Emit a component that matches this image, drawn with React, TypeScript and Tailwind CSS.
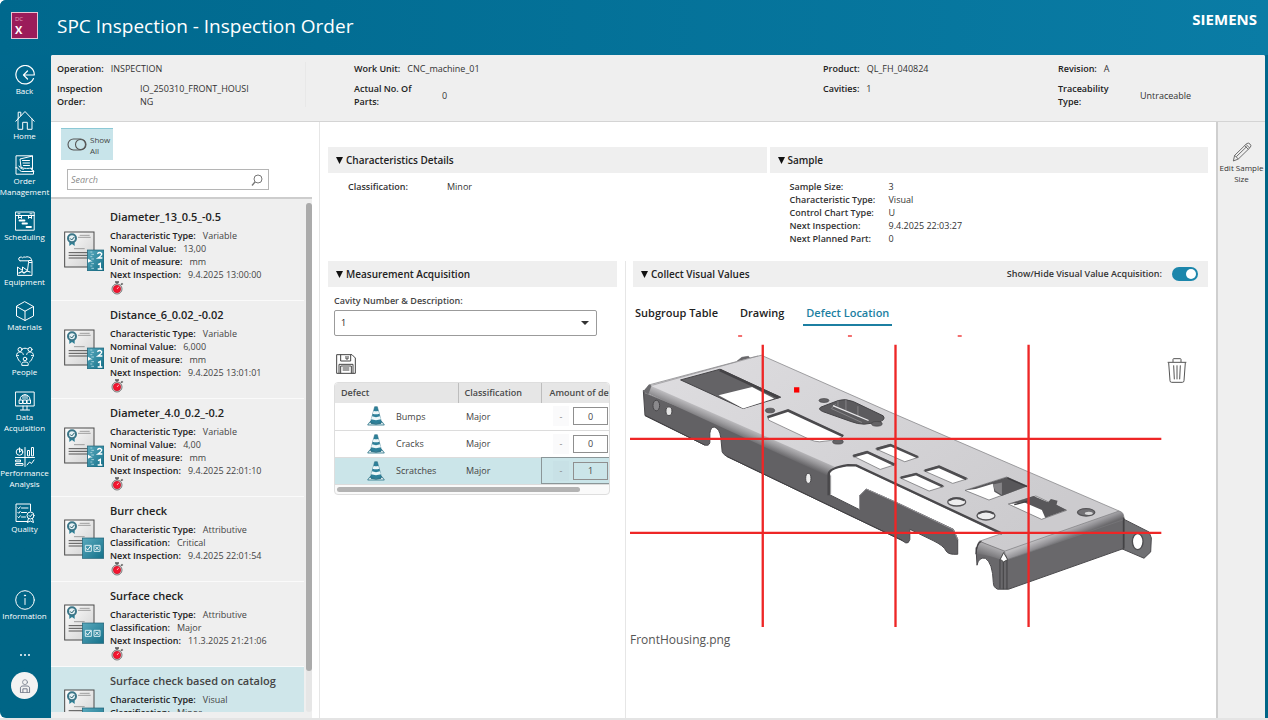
import { useState } from "react";
import type { ReactNode } from "react";
import clsx from "clsx";

/* ---------- sidebar icons ---------- */

function LineIcon({ children, className = "w-5 h-5" }: { children: ReactNode; className?: string }) {
  return (
    <svg
      viewBox="0 0 20 20"
      className={className}
      fill="none"
      stroke="currentColor"
      strokeWidth="1"
      strokeLinecap="round"
      strokeLinejoin="round"
      aria-hidden="true"
    >
      {children}
    </svg>
  );
}

const BackIcon = () => (
  <LineIcon>
    <path d="M18.500 13.500A9.200 9.200 0 1 1 19.300 10H8.500M12.500 6 8.500 10l4 4" strokeWidth="1.200" />
  </LineIcon>
);

const HomeIcon = () => (
  <LineIcon>
    <path d="M.8 11.200 10 1.500l9.200 9.700M3 9v10.300h4.700v-7h4.600v7H17V9M3.200 8.500V2.200h2.600v3.500" />
  </LineIcon>
);

const OrderIcon = () => (
  <LineIcon>
    <path d="M1 13V.8h16.500v13M1 13v6.200h17.500v-3.500l-2-1M1 12.500c3 0 3 3.500 5.500 4h12.500L16 13.200M4 11c1 2.500 3 3 4.500 3.200M17.500 1 5 4l1 8.200c3 2 8 1 10.500 1M7.500 5.500h7M8 8h6.500M8.500 10.500h6" />
  </LineIcon>
);

const SchedulingIcon = () => (
  <LineIcon>
    <path d="M.8 1h18.400v18.200H.8zM.8 4.500h18.400" />
    <path d="M3 2.800h2M15 2.800h2M3.500 4.500v3l1.500-1.500 1.500 1.500v-3M13.500 4.500v3l1.500-1.500 1.500 1.500v-3" />
    <path d="M4.500 9.500h5M7.500 12.500h4.500M11.500 16h4.500" strokeWidth="1.800" />
  </LineIcon>
);

const EquipmentIcon = () => (
  <LineIcon>
    <path d="M2.500 19V11l5 3.500v-3.500l5 3.500 1-8h3.500v12.500z" />
    <path d="M13.500 6V4.500H17V6.500" />
    <path d="M5 4.800a1.900 1.900 0 0 1 0-3.600q1.500-.6 2.500.6 1.200-1.400 3-.6Q12 .4 13.500 1q2.500 0 3 2.500M5 4.800h8" />
    <path d="M4 17l3-1.500 2 1.500 3-2 3 1" strokeWidth="1.300" />
  </LineIcon>
);

const MaterialsIcon = () => (
  <LineIcon>
    <path d="M10 .8 18.500 5.500v9.500L10 19.500 1.500 15V5.500zM1.500 5.500 10 10.200l8.500-4.700M10 10.200v9.300" />
  </LineIcon>
);

const PeopleIcon = () => (
  <LineIcon>
    <circle cx="5" cy="3.500" r="2" />
    <circle cx="15" cy="3.500" r="2" />
    <circle cx="10" cy="13" r="1.800" />
    <path d="M1.500 10c0-3 1.500-4 3.500-4s3 1 3.300 2.500M18.500 10c0-3-1.500-4-3.500-4s-3 1-3.300 2.500M6.800 19v-1.500c0-2 6.400-2 6.400 0V19zM7.500 2.800c1.500-.8 3.500-.8 5 0M2.500 11.500c.5 2 1.500 3.500 3 4.500M17.500 11.500c-.5 2-1.500 3.500-3 4.500M1.500 10l2-.5M18.500 10l-2-.5" />
  </LineIcon>
);

const DataIcon = () => (
  <LineIcon>
    <path d="M.8 1h18.400v14H.8zM8 15v3.500M12 15v3.500M5.500 19h9" />
    <path d="M5 8.500C5 2 15 2 15 8.500M8 4.500v3M12 4.500v3M10 3.500v4" />
    <path d="M4.500 9h3v3.500h-3zM8.500 9h3v3.500h-3zM12.500 9h3v3.500h-3z" />
  </LineIcon>
);

const PerformanceIcon = () => (
  <LineIcon>
    <path d="M10 .5v19M.5 10.500h19" />
    <circle cx="4.500" cy="5" r="3.300" />
    <path d="M4.500 5V.8M4.500 5l3-2M12.500 8.500v-5h2v5zM16.500 8.500v-8h2v8z" />
    <path d="M1 13h4.500v1.800H1zM1 16.500h7v1.800H1zM12 18l2.500-3 2 1.500 2.500-3.500" />
  </LineIcon>
);

const QualityIcon = () => (
  <LineIcon>
    <path d="M13 18.500H1V1h14.500v7M6.500 5h6.500M6.500 9.500h5M6.500 14h4" />
    <path d="M2.800 4.800l1 1 1.400-2M2.800 9.300l1 1 1.400-2M2.800 13.800l1 1 1.400-2" />
    <circle cx="15.500" cy="12.500" r="3.500" />
    <path d="M13.500 15.500 12.300 19.500l3-1.500 3.200 1.500-1-4M14 12.500l1.200 1.200 2-2.400" />
  </LineIcon>
);

const InfoIcon = () => (
  <LineIcon>
    <circle cx="10" cy="10" r="9.300" />
    <path d="M10 8.500v6" />
    <circle cx="10" cy="5.500" r=".6" fill="currentColor" />
  </LineIcon>
);

const navItems: { label: string; icon: () => ReactNode }[] = [
  { label: "Back", icon: BackIcon },
  { label: "Home", icon: HomeIcon },
  { label: "Order Management", icon: OrderIcon },
  { label: "Scheduling", icon: SchedulingIcon },
  { label: "Equipment", icon: EquipmentIcon },
  { label: "Materials", icon: MaterialsIcon },
  { label: "People", icon: PeopleIcon },
  { label: "Data Acquisition", icon: DataIcon },
  { label: "Performance Analysis", icon: PerformanceIcon },
  { label: "Quality", icon: QualityIcon },
];

function NavButton({ label, icon: Icon }: { label: string; icon: () => ReactNode }) {
  return (
    <button
      type="button"
      className="flex w-full flex-col items-center text-center text-[8px] leading-[11px] text-white"
    >
      <Icon />
      <span className="w-min">{label}</span>
    </button>
  );
}

function Sidebar() {
  return (
    <nav className="flex w-[51px] shrink-0 flex-col pt-2.5 pr-0.5 pb-[19px]">
      <div className="flex flex-col gap-3.5">
        {navItems.map((item) => (
          <NavButton key={item.label} {...item} />
        ))}
      </div>
      <div className="mt-auto flex flex-col items-center">
        <NavButton label="Information" icon={InfoIcon} />
        <button type="button" aria-label="More" className="mt-8 flex gap-0.5 py-px">
          <span className="h-0.5 w-0.5 rounded-full bg-white" />
          <span className="h-0.5 w-0.5 rounded-full bg-white" />
          <span className="h-0.5 w-0.5 rounded-full bg-white" />
        </button>
        <button
          type="button"
          aria-label="User"
          className="mt-[15px] flex h-[27px] w-[27px] items-center justify-center rounded-full bg-[#f3f3f3] text-gray-500"
        >
          <LineIcon className="h-3.5 w-3.5">
            <circle cx="10" cy="4.500" r="3.500" />
            <path d="M3.500 19v-6c0-2 1.500-3 3.500-3h6c2 0 3.500 1 3.500 3v6zM7 19v-5h6v5" strokeWidth="1.300" />
          </LineIcon>
        </button>
      </div>
    </nav>
  );
}

/* ---------- order header ---------- */

function Field({ label, children, wide }: { label: string; children: ReactNode; wide?: string }) {
  return (
    <div className="flex items-center leading-[13px]">
      <dt className={clsx("font-semibold text-[#222]", wide ?? "mr-[7px]")}>{label}</dt>
      <dd className="text-[#333]">{children}</dd>
    </div>
  );
}

function OrderHeader() {
  return (
    <header className="grid h-[67px] shrink-0 grid-cols-[297fr_469fr_235fr_207fr] border-b border-[#d4d4d4] bg-[#efefef] pt-[7px] pl-1.5 text-[9px]">
      <dl className="mr-12 flex h-[45px] flex-col gap-[7px] border-r border-[#e8e8e8]">
        <Field label="Operation:">INSPECTION</Field>
        <Field label="Inspection Order:" wide="w-[60px] mr-[23px]">
          <span className="block w-28 break-all">IO_250310_FRONT_HOUSING</span>
        </Field>
      </dl>
      <dl className="flex flex-col gap-[7px]">
        <Field label="Work Unit:">CNC_machine_01</Field>
        <Field label="Actual No. Of Parts:" wide="w-[70px] mr-[18px]">0</Field>
      </dl>
      <dl className="flex flex-col gap-[7px]">
        <Field label="Product:">QL_FH_040824</Field>
        <Field label="Cavities:">1</Field>
      </dl>
      <dl className="flex flex-col gap-[7px]">
        <Field label="Revision:">A</Field>
        <Field label="Traceability Type:" wide="w-[60px] mr-[22px]">Untraceable</Field>
      </dl>
    </header>
  );
}

/* ---------- characteristics list ---------- */

type Kind = "variable" | "attributive";

interface Characteristic {
  title: string;
  kind: Kind;
  rows: [string, string][];
  selected?: boolean;
}

const characteristics: Characteristic[] = [
  {
    title: "Diameter_13_0.5_-0.5",
    kind: "variable",
    rows: [
      ["Characteristic Type:", "Variable"],
      ["Nominal Value:", "13,00"],
      ["Unit of measure:", "mm"],
      ["Next Inspection:", "9.4.2025 13:00:00"],
    ],
  },
  {
    title: "Distance_6_0.02_-0.02",
    kind: "variable",
    rows: [
      ["Characteristic Type:", "Variable"],
      ["Nominal Value:", "6,000"],
      ["Unit of measure:", "mm"],
      ["Next Inspection:", "9.4.2025 13:01:01"],
    ],
  },
  {
    title: "Diameter_4.0_0.2_-0.2",
    kind: "variable",
    rows: [
      ["Characteristic Type:", "Variable"],
      ["Nominal Value:", "4,00"],
      ["Unit of measure:", "mm"],
      ["Next Inspection:", "9.4.2025 22:01:10"],
    ],
  },
  {
    title: "Burr check",
    kind: "attributive",
    rows: [
      ["Characteristic Type:", "Attributive"],
      ["Classification:", "Critical"],
      ["Next Inspection:", "9.4.2025 22:01:54"],
    ],
  },
  {
    title: "Surface check",
    kind: "attributive",
    rows: [
      ["Characteristic Type:", "Attributive"],
      ["Classification:", "Major"],
      ["Next Inspection:", "11.3.2025 21:21:06"],
    ],
  },
  {
    title: "Surface check based on catalog",
    kind: "attributive",
    selected: true,
    rows: [
      ["Characteristic Type:", "Visual"],
      ["Classification:", "Minor"],
      ["Next Inspection:", "9.4.2025 22:03:27"],
    ],
  },
];

function CertificateIcon({ kind }: { kind: Kind }) {
  return (
    <svg viewBox="0 0 120 120" className="h-10 w-10 shrink-0" aria-hidden="true">
      <defs>
        <linearGradient id={`paper-${kind}`} x1="0" y1="0" x2="1" y2="1">
          <stop offset="0" stopColor="#fff" />
          <stop offset="1" stopColor="#cfcfcf" />
        </linearGradient>
        <linearGradient id={`tile-${kind}`} x1="0" y1="0" x2="1" y2="1">
          <stop offset="0" stopColor="#5aa9bd" />
          <stop offset="1" stopColor="#14718a" />
        </linearGradient>
      </defs>
      <rect x="2" y="3" width="88" height="105" fill={`url(#paper-${kind})`} stroke="#4a4a4a" strokeWidth="3" />
      <path d="M47 13h30M42 19h38M30 53h32" stroke="#777" strokeWidth="2" />
      <path d="M14 65h66M14 73h66M14 81h66" stroke="#555" strokeWidth="3" />
      <path d="M16 28v17l8-6 8 6V28z" fill="#2f7f95" />
      <circle cx="24" cy="22" r="12" fill="#e6f1f4" stroke="#3b7688" strokeWidth="6" />
      <path d="M18 22l5 5 8-9" fill="none" stroke="#1e5868" strokeWidth="3" />
      {kind === "variable" ? (
        <>
          <rect x="70" y="57" width="50" height="63" fill={`url(#tile-${kind})`} stroke="#1c5f74" strokeWidth="2" />
          <path d="M85 63h-6M90 70h-8M85 77h-6M90 84h-8M85 91h-6M90 98h-8M85 105h-6M90 112h-8" stroke="#d7edf2" strokeWidth="2" />
          <path d="M72 83l10 6-10 6z" fill="#fff" />
          <path d="M100 68q7-7 13 0 1 5-11 13h13M102 101l7-4v16M101 114h14" fill="none" stroke="#fff" strokeWidth="4" />
        </>
      ) : (
        <>
          <rect x="55" y="57" width="64" height="61" fill={`url(#tile-${kind})`} stroke="#1c5f74" strokeWidth="2" />
          <path d="M64 79h18v18H64zM90 79h18v18H90z" fill="none" stroke="#d7edf2" strokeWidth="3" />
          <path d="M67 88l4 5 9-12M94 83l10 10M104 83l-10 10" fill="none" stroke="#fff" strokeWidth="3" />
        </>
      )}
    </svg>
  );
}

function StopwatchIcon() {
  return (
    <svg viewBox="0 0 42 42" className="h-3.5 w-3.5" aria-hidden="true">
      <path d="M15 1h12v4H15zM19 4h4v6h-4z" fill="#555" />
      <path d="M31 10l5-5 4 4-5 4z" fill="#666" />
      <circle cx="21" cy="24" r="15" fill="#e4e4e4" stroke="#777" strokeWidth="3" />
      <circle cx="21" cy="24" r="11" fill="#f5152f" stroke="#c40f26" strokeWidth="2" />
      <path d="M21 24l6-7" stroke="#fff" strokeWidth="2" />
    </svg>
  );
}

function CharacteristicItem({ item }: { item: Characteristic }) {
  return (
    <li
      className={clsx(
        "flex items-center gap-1.5 border-b border-[#fafafa] pt-1 pb-[5px] pl-[13px]",
        item.selected && "bg-[#cfe6ea]"
      )}
    >
      <CertificateIcon kind={item.kind} />
      <div className="min-w-0 whitespace-nowrap">
        <h3 className={clsx("text-[11px] leading-5 font-semibold", item.selected ? "text-[#444]" : "text-[#222]")}>
          {item.title}
        </h3>
        <dl className="mt-0.5 text-[9px] leading-[13px]">
          {item.rows.map(([label, value]) => (
            <div key={label} className="flex gap-[7px]">
              <dt className="font-semibold text-[#222]">{label}</dt>
              <dd className="text-[#444]">{value}</dd>
            </div>
          ))}
        </dl>
        <StopwatchIcon />
      </div>
    </li>
  );
}

function CharacteristicsPanel() {
  const [showAll, setShowAll] = useState(true);

  return (
    <section className="flex w-[269px] shrink-0 flex-col border-r border-[#e6e6e6] bg-white">
      <div className="flex flex-col items-start gap-[9px] pt-1.5 pb-[7px] pl-2.5">
        <button
          type="button"
          aria-pressed={showAll}
          onClick={() => setShowAll(!showAll)}
          className="flex h-8 w-[52px] items-center gap-[3px] border-t border-[#8cc9d6] bg-[#c8e4ea] pl-1.5 text-left text-[8px] leading-[11px] text-[#444]"
        >
          <svg viewBox="0 0 20 14" className="h-3.5 w-5 shrink-0" fill="none" stroke="#555" strokeWidth="1.100">
            <rect x="1" y="1" width="18" height="11" rx="5.500" />
            <circle cx="13.500" cy="6.500" r="5" />
          </svg>
          <span className="w-min">Show All</span>
        </button>
        <label className="ml-1.5 flex h-[21px] w-[202px] items-center border border-[#b5b5b5] bg-white px-[3px]">
          <input
            type="text"
            placeholder="Search"
            aria-label="Search"
            className="min-w-0 flex-1 text-[9px] outline-none placeholder:text-[#8a8a8a] placeholder:italic"
          />
          <svg viewBox="0 0 12 12" className="mr-0.5 h-3 w-3" fill="none" stroke="#777">
            <circle cx="7" cy="5" r="4" />
            <path d="M4 8 1 11.500" strokeWidth="1.300" />
          </svg>
        </label>
      </div>
      <div className="mr-[7px] flex min-h-0 flex-1 border-t-2 border-[#cdcdcd] bg-[#efefef] pt-1 pb-1.5">
        <ul className="min-w-0 flex-1 overflow-hidden">
          {characteristics.map((item) => (
            <CharacteristicItem key={item.title} item={item} />
          ))}
        </ul>
        <div className="ml-0.5 w-1.5 rounded-full bg-[#e6e6e6]">
          <div className="h-[92%] rounded-full bg-[#ababab]" />
        </div>
      </div>
    </section>
  );
}

/* ---------- details ---------- */

function SectionBar({ title, children }: { title: string; children?: ReactNode }) {
  return (
    <div className="flex h-[26px] items-center justify-between bg-[#efefef] pr-2.5 pl-2">
      <h2>
        <button type="button" className="flex items-center gap-[3px] text-[10px] font-semibold text-[#222]">
          <svg viewBox="0 0 7 7" className="h-[7px] w-[7px]" aria-hidden="true">
            <path d="M0 0h7L3.500 7z" fill="#111" />
          </svg>
          {title}
        </button>
      </h2>
      {children}
    </div>
  );
}

const sampleRows = [
  ["Sample Size:", "3"],
  ["Characteristic Type:", "Visual"],
  ["Control Chart Type:", "U"],
  ["Next Inspection:", "9.4.2025 22:03:27"],
  ["Next Planned Part:", "0"],
];

function DetailRows({ rows }: { rows: string[][] }) {
  return (
    <dl className="grid grid-cols-[99px_1fr] pt-[7px] pl-5 text-[9px] leading-[13px]">
      {rows.map(([label, value]) => (
        <div key={label} className="contents">
          <dt className="font-semibold text-[#333]">{label}</dt>
          <dd className="text-[#333]">{value}</dd>
        </div>
      ))}
    </dl>
  );
}

function ConeIcon() {
  return (
    <svg viewBox="0 0 54 60" className="h-5 w-[18px]" aria-hidden="true">
      <path d="M2 57l7-10h36l7 10z" fill="#e8f2f4" stroke="#2b7388" strokeWidth="2.500" />
      <path d="M23 2h8l13 48q-17 7-34 0z" fill="#2e819a" stroke="#23657a" strokeWidth="1.500" />
      <path d="M20 14q7 3 14 0l3 9q-10 4-20 0zM15 31q12 5 24 0l3 9q-15 5-30 0z" fill="#eef7f9" />
      <path d="M12 52q15 5 30 0" stroke="#2b7388" strokeWidth="3" fill="none" />
    </svg>
  );
}

const defects = [
  { name: "Bumps", classification: "Major", amount: 0 },
  { name: "Cracks", classification: "Major", amount: 0 },
  { name: "Scratches", classification: "Major", amount: 1 },
];

function DefectTable() {
  return (
    <div className="overflow-hidden rounded-sm border border-[#dedede] bg-[#fafafa]">
      <div className="overflow-hidden">
        <table className="w-[306px] table-fixed border-collapse bg-white text-[9px] text-[#444]">
          <thead>
            <tr className="h-5 bg-[#e6e6e6] text-left text-[#4a4a4a]">
              <th className="w-[123px] border-r border-[#bdbdbd] px-1.5 font-semibold">Defect</th>
              <th className="w-[83px] border-r border-[#bdbdbd] px-1.5 font-semibold">Classification</th>
              <th className="px-2 font-semibold whitespace-nowrap">Amount of defects</th>
            </tr>
          </thead>
          <tbody>
            {defects.map((defect) => {
              const selected = defect.name === "Scratches";
              return (
                <tr
                  key={defect.name}
                  className={clsx("h-[27px] border-b border-[#dcdcdc]", selected && "bg-[#cbe5e9]")}
                >
                  <td className="p-0 pl-8">
                    <span className="flex items-center gap-[11px]">
                      <ConeIcon />
                      {defect.name}
                    </span>
                  </td>
                  <td className="p-0 pl-2">{defect.classification}</td>
                  <td className={clsx("p-0", selected && "outline-1 -outline-offset-1 outline-[#8b9698]")}>
                    <span className="flex items-center gap-1 pl-3">
                      <button
                        type="button"
                        aria-label={`Decrease ${defect.name}`}
                        className="h-5 w-4 shrink-0 bg-gray-400/5 text-[#888]"
                      >
                        -
                      </button>
                      <input
                        type="text"
                        defaultValue={defect.amount}
                        aria-label={`Amount of ${defect.name}`}
                        className="h-[18px] w-[35px] shrink-0 border border-[#8f8f8f] text-center"
                      />
                    </span>
                  </td>
                </tr>
              );
            })}
          </tbody>
        </table>
      </div>
      <div className="px-0.5 py-0.5">
        <div className="h-[5px] w-[90%] rounded-full bg-[#b3b3b3]" />
      </div>
    </div>
  );
}

function MeasurementAcquisition() {
  return (
    <div className="min-w-0 pr-2">
      <SectionBar title="Measurement Acquisition" />
      <div className="flex flex-col pt-[7px] pr-[7px] pl-1.5">
        <label htmlFor="cavity" className="text-[9px] leading-[13px] font-semibold text-[#444]">
          Cavity Number &amp; Description:
        </label>
        <div className="relative mt-[3px] mr-[13px]">
          <select
            id="cavity"
            className="block h-[26px] w-full appearance-none rounded-xs border border-[#9b9b9b] bg-white px-1.5 text-[9px] text-[#222]"
          >
            <option>1</option>
          </select>
          <svg viewBox="0 0 8 4" className="pointer-events-none absolute top-[11px] right-2 h-1 w-2" aria-hidden="true">
            <path d="M0 0h8L4 4z" fill="#333" />
          </svg>
        </div>
        <button type="button" aria-label="Save" className="mt-[18px] mb-2 self-start px-0.5">
          <svg viewBox="0 0 60 60" className="block h-5 w-5" fill="none" stroke="#444" strokeWidth="3">
            <path d="M2 2h46l10 10v46H2zM14 2v19h30V2M30 6v9h6V6M9 58V31h42v27M14 58V36h32v22M20 42h20M20 48h20" />
          </svg>
        </button>
        <DefectTable />
      </div>
    </div>
  );
}

/* ---------- defect location drawing ---------- */

function HousingDrawing() {
  return (
    <svg viewBox="15 -14 1602 882" className="block w-full max-w-[534px]" role="img" aria-label="Front housing">
      <defs>
        <linearGradient id="plate" x1="0" y1="0" x2="1" y2="0.500">
          <stop offset="0" stopColor="#dedde0" />
          <stop offset="0.500" stopColor="#d5d4d7" />
          <stop offset="1" stopColor="#cccbce" />
        </linearGradient>
        <linearGradient id="bend" gradientUnits="userSpaceOnUse" x1="330" y1="242" x2="312" y2="284">
          <stop offset="0" stopColor="#c9c8cb" />
          <stop offset="0.500" stopColor="#99989b" />
          <stop offset="1" stopColor="#5f5e61" />
        </linearGradient>
        <linearGradient id="bendEnd" gradientUnits="userSpaceOnUse" x1="1315" y1="572" x2="1328" y2="604">
          <stop offset="0" stopColor="#bdbcbf" />
          <stop offset="0.500" stopColor="#97969a" />
          <stop offset="1" stopColor="#6a696c" />
        </linearGradient>
        <linearGradient id="bendCorner" gradientUnits="userSpaceOnUse" x1="1100" y1="615" x2="1088" y2="650">
          <stop offset="0" stopColor="#b9b8bb" />
          <stop offset="1" stopColor="#757477" />
        </linearGradient>
      </defs>

      {/* side wall */}
      <path
        d="M55 153 60 228 240 317q13 3 15-8v-28q3-20 14-18 15 4 19 32l4 42q3 8 14 14L830 602l14 9q8 3 12-10v-31l70 34q33 16 39 31 6 12 35 10v-45l-13-30L815 489 725 449l-20 20v42l-90-45v-62z"
        fill="#626164"
        stroke="#49484b"
        strokeWidth="3"
      />
      <path d="M705 511v-42l20-20 90 40 172 82 13 30" fill="none" stroke="#97969a" strokeWidth="3" />
      <path d="M60 228 240 317M306 351 834 604" stroke="#3f3e41" strokeWidth="3" />
      <ellipse cx="94" cy="198" rx="10" ry="16" fill="#8a898c" stroke="#464548" strokeWidth="3" />
      <ellipse cx="132" cy="215" rx="9" ry="13" fill="#e5e5e5" stroke="#464548" strokeWidth="3" />
      <ellipse cx="551" cy="417" rx="8" ry="15" fill="#eee" stroke="#464548" strokeWidth="3" />

      {/* ear on the far end */}
      <path d="M1490 535 1575 578l7 18-2 42-20 19-68-29z" fill="#707073" stroke="#4b4a4d" strokeWidth="3" />
      <ellipse cx="1541" cy="607" rx="16" ry="24" fill="#fff" stroke="#4b4a4d" strokeWidth="4" />

      {/* top plate */}
      <path
        d="M72 136 335 66 351 53 371 50 375 55 410 47 795 217 1485 515 1490 530 1140 640 1065 606 1128 584 690 377 665 378 620 390 60 160z"
        fill="url(#plate)"
        stroke="#79787b"
        strokeWidth="2"
      />
      <path d="M335 66l16-13 20-3 4 5z" fill="#68676a" />
      <path d="M82 137 400 49" stroke="#8f8e91" strokeWidth="2" />
      <path d="M72 136 630 382q-18 8-17 30L55 155z" fill="url(#bend)" />
      <path d="M55 155l17-20 8 3-10 27z" fill="#6c6b6e" />
      <path d="M612 468v-64q2-19 58-27l25 1 438 205" fill="none" stroke="#49484b" strokeWidth="7" />
      <path d="M618 466v-58" stroke="#909093" strokeWidth="3" />

      {/* front face and folded corner */}
      <path
        d="M1140 650 1498 535v93l-345 122h-33q-13-5-13-20-2-60-24-73-20-4-25 21l-3-53z"
        fill="#69686b"
        stroke="#49484b"
        strokeWidth="3"
      />
      <path d="M1065 606 1142 636 1128 662q-25-10-72-18 0-28 9-38z" fill="url(#bendCorner)" stroke="#69686b" strokeWidth="2" />
      <path d="M1140 636 1485 515q17 4 14 26L1150 661z" fill="url(#bendEnd)" stroke="#79787b" strokeWidth="2" />
      <path d="M1055 645q1-32 16-39" fill="none" stroke="#3d3c3f" strokeWidth="4" />
      <path d="M1127 660v88M1137 664v86M1148 662v88" stroke="#414043" strokeWidth="3" />
      <path d="M1138 640l-10 20 10 8 12-7z" fill="#fff" stroke="#444" strokeWidth="3" />
      <path d="M1499 535v93" stroke="#434245" strokeWidth="5" />

      {/* large window */}
      <path d="M167 121 285 89 468 173 355 207z" fill="#646366" stroke="#454447" strokeWidth="3" />
      <path d="M281 167 382 142 448 177 355 207z" fill="#fff" />
      <path d="M285 91 462 174" stroke="#444346" strokeWidth="8" />

      {/* slots */}
      <path d="M430 232l60-20 165 75q4 13-70 20-15 0-30-7L432 242z" fill="#fff" stroke="#69686b" strokeWidth="2" />
      <path d="M428 233l62-20 166 77" fill="none" stroke="#4b4a4d" strokeWidth="8" />
      <path
        d="M588 203l53-20q20-7 45 3l90 43q10 13-17 20l-40 5q-20 0-40-8l-85-30q-15-7-6-13z"
        fill="#5c5b5e"
        stroke="#444346"
        strokeWidth="3"
      />
      <path d="M634 193l-14 14 92 42M640 185v16M664 181v31M700 200v32" fill="none" stroke="#858487" strokeWidth="3" />
      <path d="M625 198 732 243" stroke="#ebeaec" strokeWidth="4" />
      <g fill="#646366" stroke="#444346" strokeWidth="2">
        <ellipse cx="436" cy="213" rx="14" ry="7" />
        <ellipse cx="598" cy="183" rx="15" ry="6" />
        <ellipse cx="757" cy="253" rx="16" ry="7" />
        <ellipse cx="640" cy="307" rx="16" ry="7" />
      </g>

      {/* connector cut-outs */}
      <g fill="#fff" stroke="#616063" strokeWidth="2">
        <path d="M684 349l42-13 88 39-47 15z" />
        <path d="M753 328l42-13 88 38-42 14z" />
        <path d="M826 415l48-13 85 39-45 14z" />
        <path d="M898 394l45-14 87 38-45 14z" />
        <path d="M1022 453l125-40 62 27-115 42z" />
        <path d="M1152 494l83-24 92 43-75 27z" />
      </g>
      <g fill="none" stroke="#4e4d50" strokeWidth="8">
        <path d="M686 350l42-12 82 38M756 329l42-12 82 36M829 415l46-11 80 37M901 394l43-12 82 37" />
      </g>
      <path d="M1024 453l125-40 61 27-78 30-22-13-4-24-52 16z" fill="#58575a" />
      <path d="M1105 435l28-6v38l-20-13z" fill="#858487" />
      <path d="M1154 494l74-24 44 19 8-10 20 5-3 12 30 16-64 23-10-23-54-23z" fill="#58575a" />
      <path d="M1170 496l38-10M1150 416l58 26" stroke="#3f3e41" strokeWidth="4" />
      <g stroke="#555457" strokeWidth="4">
        <ellipse cx="997" cy="488" rx="27" ry="12" fill="#ededee" />
        <ellipse cx="1085" cy="529" rx="27" ry="13" fill="#ededee" />
        <ellipse cx="1386" cy="519" rx="26" ry="11" fill="#737276" />
      </g>
      <path d="M974 483q20-12 46 0M1062 523q23-13 46 0" stroke="#4c4b4e" strokeWidth="6" fill="none" />
      <ellipse cx="1394" cy="522" rx="12" ry="5" fill="#d7d7d8" />

      {/* location grid */}
      <path
        d="M414 15v849M813 15v849M1213 15v849M15 298h1597M15 581h1597"
        fill="none"
        stroke="#ee2626"
        strokeWidth="7"
      />
      <path d="M340-11h12M670-11h12M1000-11h12" stroke="#f04040" strokeWidth="4" />
      <path d="M508 143h16v16h-16z" fill="#f90000" />
    </svg>
  );
}

const tabs = ["Subgroup Table", "Drawing", "Defect Location"];

function CollectVisualValues() {
  const [active, setActive] = useState("Defect Location");
  const [visible, setVisible] = useState(true);

  return (
    <div className="flex min-w-0 flex-col border-l border-[#e6e6e6] pl-1">
      <div className="pl-[3px]">
        <SectionBar title="Collect Visual Values">
          <label className="flex items-center gap-2.5 text-[9px] font-semibold text-[#333]">
            Show/Hide Visual Value Acquisition:
            <input
              type="checkbox"
              role="switch"
              checked={visible}
              onChange={(e) => setVisible(e.target.checked)}
              className="peer sr-only"
            />
            <span className="flex h-3.5 w-[26px] items-center rounded-full bg-[#b5b5b5] px-0.5 peer-checked:justify-end peer-checked:bg-[#1c86ab]">
              <span className="h-2.5 w-2.5 rounded-full bg-white" />
            </span>
          </label>
        </SectionBar>
      </div>
      <div role="tablist" className="flex gap-4 pt-[15px] pl-0.5 text-[11px] font-semibold">
        {tabs.map((tab) => (
          <button
            key={tab}
            type="button"
            role="tab"
            aria-selected={tab === active}
            onClick={() => setActive(tab)}
            className={clsx(
              "h-6 border-b-2 px-[3px]",
              tab === active ? "border-[#1c7fa2] text-[#1c7fa2]" : "border-transparent text-[#222]"
            )}
          >
            {tab}
          </button>
        ))}
      </div>
      <div className="flex items-start justify-between gap-1 pt-[9px] pr-[21px]">
        <figure className="min-w-0 flex-1">
          <HousingDrawing />
          <figcaption className="pt-1 text-xs leading-4 text-[#555]">FrontHousing.png</figcaption>
        </figure>
        <button type="button" aria-label="Delete defect" className="mt-[23px]">
          <svg viewBox="0 0 60 75" className="h-[25px] w-5" fill="none" stroke="#555" strokeWidth="3">
            <path d="M2 13h56M18 12V4q0-2 2-2h20q2 0 2 2v8M5 14l4 54q0 5 5 5h32q5 0 5-5l4-54M20 22l2 42M30 22v42M40 22l-2 42" />
          </svg>
        </button>
      </div>
    </div>
  );
}

function ToolStrip() {
  return (
    <aside className="w-[49px] shrink-0 border-l-2 border-[#cfcfcf] bg-[#efefef] pt-5">
      <button
        type="button"
        className="flex w-full flex-col items-center text-center text-[8px] leading-[11px] text-[#333]"
      >
        <svg viewBox="0 0 60 60" className="h-5 w-5" fill="none" stroke="#555" strokeWidth="2.500">
          <path d="M4 57l4-17L44 5q5-4 10 1t1 10L19 51zM8 40l11 11M38 11l11 11M42 7l11 11M13 44 44 14" />
        </svg>
        Edit Sample Size
      </button>
    </aside>
  );
}

export default function App() {
  return (
    <div className="flex h-screen flex-col overflow-hidden border-b-2 border-[#e4e4e4] bg-white font-['Open_Sans','Noto_Sans',sans-serif]">
      <div className="flex min-h-0 flex-1 flex-col rounded-l-md bg-linear-to-b from-[#006a93] to-[#006586] to-20%">
        <div className="flex h-[55px] shrink-0 items-start rounded-tl-md bg-linear-to-r from-[#00688d] to-[#0a7ca5] pr-[11px] pl-[11px]">
          <div className="mt-3 flex h-[27px] w-[27px] flex-col border border-[#e9c4d5] bg-[#9b1c5a] pt-0.5 pl-[3px] text-white">
            <span className="text-[6px] leading-2 text-[#e0a3c0]">DC</span>
            <span className="text-[11px] leading-3.5 font-bold">X</span>
          </div>
          <h1 className="mt-3 ml-[19px] text-[19px] leading-7 text-white">SPC Inspection - Inspection Order</h1>
          <span className="mt-2.5 ml-auto text-[15px] leading-[18px] font-bold text-white">SIEMENS</span>
        </div>
        <div className="flex min-h-0 flex-1">
          <Sidebar />
          <div className="mr-[3px] flex min-w-0 flex-1 flex-col overflow-hidden rounded-t-xs bg-white">
            <OrderHeader />
            <div className="flex min-h-0 flex-1">
              <CharacteristicsPanel />
              <main className="flex min-w-0 flex-1 flex-col px-2 pt-[25px]">
                <div className="grid min-h-[114px] grid-cols-2 gap-[3px]">
                  <section>
                    <SectionBar title="Characteristics Details" />
                    <DetailRows rows={[["Classification:", "Minor"]]} />
                  </section>
                  <section>
                    <SectionBar title="Sample" />
                    <DetailRows rows={sampleRows} />
                  </section>
                </div>
                <div className="grid flex-1 grid-cols-[minmax(0,297fr)_minmax(0,583fr)]">
                  <MeasurementAcquisition />
                  <CollectVisualValues />
                </div>
              </main>
              <ToolStrip />
            </div>
          </div>
        </div>
      </div>
    </div>
  );
}
